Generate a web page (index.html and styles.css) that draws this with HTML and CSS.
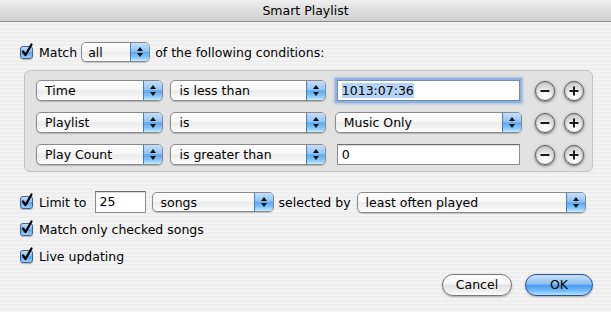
FILE: index.html
```html
<!DOCTYPE html>
<html lang="en">
<head>
  <meta charset="UTF-8">
  <title>Smart Playlist</title>
  <link rel="stylesheet" href="styles.css">
</head>
<body>
  <div class="window">
    <div class="titlebar">Smart Playlist</div>

    <div class="content">
      <div class="match-row">
        <label class="check"><span class="box"><svg width="13" height="13" viewBox="0 0 13 13"><path d="M3 6.5 L5.5 10 L11.5 -0.5" fill="none" stroke="#000" stroke-width="2.2" stroke-linecap="round" stroke-linejoin="round"/></svg></span>Match</label>
        <div class="popup popup-all"><span class="popup-label">all</span><span class="arrows"></span></div>
        <span class="label">of the following conditions:</span>
      </div>

      <div class="conditions">
        <div class="cond-row">
          <div class="popup popup-field"><span class="popup-label">Time</span><span class="arrows"></span></div>
          <div class="popup popup-op"><span class="popup-label">is less than</span><span class="arrows"></span></div>
          <div class="field field-value focused"><span class="selected">1013:07:36</span></div>
          <div class="round-btn"><svg width="20" height="20" viewBox="0 0 20 20"><path d="M5.5 10 H14.5" stroke="#1a1a1a" stroke-width="2"/></svg></div>
          <div class="round-btn"><svg width="20" height="20" viewBox="0 0 20 20"><path d="M5.5 10 H14.5 M10 5.5 V14.5" stroke="#1a1a1a" stroke-width="2"/></svg></div>
        </div>
        <div class="cond-row">
          <div class="popup popup-field"><span class="popup-label">Playlist</span><span class="arrows"></span></div>
          <div class="popup popup-op"><span class="popup-label">is</span><span class="arrows"></span></div>
          <div class="popup popup-value"><span class="popup-label">Music Only</span><span class="arrows"></span></div>
          <div class="round-btn"><svg width="20" height="20" viewBox="0 0 20 20"><path d="M5.5 10 H14.5" stroke="#1a1a1a" stroke-width="2"/></svg></div>
          <div class="round-btn"><svg width="20" height="20" viewBox="0 0 20 20"><path d="M5.5 10 H14.5 M10 5.5 V14.5" stroke="#1a1a1a" stroke-width="2"/></svg></div>
        </div>
        <div class="cond-row">
          <div class="popup popup-field"><span class="popup-label">Play Count</span><span class="arrows"></span></div>
          <div class="popup popup-op"><span class="popup-label">is greater than</span><span class="arrows"></span></div>
          <div class="field field-value">0</div>
          <div class="round-btn"><svg width="20" height="20" viewBox="0 0 20 20"><path d="M5.5 10 H14.5" stroke="#1a1a1a" stroke-width="2"/></svg></div>
          <div class="round-btn"><svg width="20" height="20" viewBox="0 0 20 20"><path d="M5.5 10 H14.5 M10 5.5 V14.5" stroke="#1a1a1a" stroke-width="2"/></svg></div>
        </div>
      </div>

      <div class="options">
        <div class="limit-row">
          <label class="check"><span class="box"><svg width="13" height="13" viewBox="0 0 13 13"><path d="M3 6.5 L5.5 10 L11.5 -0.5" fill="none" stroke="#000" stroke-width="2.2" stroke-linecap="round" stroke-linejoin="round"/></svg></span>Limit to</label>
          <div class="field field-limit">25</div>
          <div class="popup popup-unit"><span class="popup-label">songs</span><span class="arrows"></span></div>
          <span class="label">selected by</span>
          <div class="popup popup-order"><span class="popup-label">least often played</span><span class="arrows"></span></div>
        </div>
        <div class="check-row">
          <label class="check"><span class="box"><svg width="13" height="13" viewBox="0 0 13 13"><path d="M3 6.5 L5.5 10 L11.5 -0.5" fill="none" stroke="#000" stroke-width="2.2" stroke-linecap="round" stroke-linejoin="round"/></svg></span>Match only checked songs</label>
        </div>
        <div class="check-row live">
          <label class="check"><span class="box"><svg width="13" height="13" viewBox="0 0 13 13"><path d="M3 6.5 L5.5 10 L11.5 -0.5" fill="none" stroke="#000" stroke-width="2.2" stroke-linecap="round" stroke-linejoin="round"/></svg></span>Live updating</label>
        </div>
      </div>

      <div class="buttons">
        <div class="btn btn-cancel">Cancel</div>
        <div class="btn btn-ok">OK</div>
      </div>
    </div>
  </div>
</body>
</html>
```

FILE: styles.css
```css
* {
  margin: 0;
  padding: 0;
  box-sizing: border-box;
}

body {
  font-family: "DejaVu Sans", "Liberation Sans", sans-serif;
  font-size: 12.5px;
  color: #000;
  background: #ededed;
}

.window {
  width: 611px;
  height: 312px;
  overflow: hidden;
  background: repeating-linear-gradient(to bottom, #eeeeee 0, #eeeeee 2px, #f3f3f3 2px, #f3f3f3 4px);
}

.titlebar {
  height: 22px;
  line-height: 21px;
  text-align: center;
  background: linear-gradient(to bottom, #f0f0f0 0%, #dedede 45%, #d2d2d2 100%);
  border-bottom: 1px solid #8e8e8e;
}

.content {
  padding: 20px 18px 0 20px;
}

/* Match row */
.match-row {
  display: flex;
  align-items: center;
  height: 20px;
}

.check {
  display: flex;
  align-items: center;
  white-space: nowrap;
}

.box {
  width: 13px;
  height: 13px;
  margin-right: 6px;
  border: 1px solid #3f628f;
  border-radius: 3px;
  background: linear-gradient(to bottom, #c4def8 0%, #86b9ef 48%, #5e9fe8 52%, #9fd3fd 100%);
  box-shadow: 0 1px 1px rgba(0, 0, 0, 0.25);
  position: relative;
}

.box svg {
  position: absolute;
  top: -2px;
  left: -1px;
  overflow: visible;
}

.label {
  white-space: nowrap;
}

/* popup buttons */
.popup {
  display: flex;
  align-items: center;
  height: 21px;
  border: 1px solid #8a8a8a;
  border-radius: 5px;
  background: linear-gradient(to bottom, #ffffff 0%, #f6f6f6 45%, #ebebeb 52%, #f7f7f7 85%, #ffffff 100%);
  box-shadow: 0 1px 1px rgba(0, 0, 0, 0.2);
  overflow: hidden;
}

.popup-label {
  flex: 1;
  padding-left: 8px;
  white-space: nowrap;
}

.arrows {
  width: 19px;
  height: 100%;
  position: relative;
  border-left: 1px solid #4b79b8;
  background: linear-gradient(to bottom, #c6e0fa 0%, #91c4f3 46%, #5ea8ef 52%, #84c7fb 80%, #c6ecff 100%);
}

.arrows::before,
.arrows::after {
  content: "";
  position: absolute;
  left: 6px;
  border-left: 3px solid transparent;
  border-right: 3px solid transparent;
}

.arrows::before {
  top: 4px;
  border-bottom: 4px solid #111;
}

.arrows::after {
  bottom: 4px;
  border-top: 4px solid #111;
}

.popup-all {
  width: 69px;
  height: 20px;
  margin: 0 5px 0 4px;
}

.popup-all .popup-label {
  padding-left: 6px;
}

/* conditions box */
.conditions {
  width: 569px;
  margin: 8px 0 0 4px;
  padding: 9px 8px 6px 11px;
  display: flex;
  flex-direction: column;
  gap: 11px;
  background: #e2e2e2;
  border: 1px solid #c4c4c4;
  border-radius: 6px;
}

.cond-row {
  display: flex;
  align-items: center;
  height: 21px;
}

.popup-field {
  width: 128px;
  margin-right: 7px;
}

.popup-op {
  width: 156px;
  margin-right: 9px;
}

.popup-value {
  width: 188px;
  margin-right: 13px;
}

.field {
  height: 21px;
  line-height: 19px;
  padding-left: 4px;
  background: #fff;
  border: 1px solid #8c8c8c;
  border-top-color: #6b6b6b;
  box-shadow: inset 0 1px 1px rgba(0, 0, 0, 0.15);
  white-space: nowrap;
}

.field-value {
  width: 184px;
  margin: 0 15px 0 2px;
}

.focused {
  border-color: #6e8fb8;
  box-shadow: 0 0 0 2px #8fb3de, 0 0 2px 3px rgba(120, 160, 215, 0.5);
}

.selected {
  background: #b5d3f7;
}

.round-btn {
  width: 20px;
  height: 20px;
  margin-right: 9px;
  border: 1px solid #606060;
  border-radius: 50%;
  background: radial-gradient(circle at 50% 75%, #ffffff 0%, #f0f0f0 35%, #cfcfcf 70%, #9c9c9c 100%);
  box-shadow: 0 1px 3px rgba(0, 0, 0, 0.6);
}

.round-btn svg {
  display: block;
  margin: -1px;
}

.round-btn:last-child {
  margin-right: 0;
}

/* options */
.options {
  margin-top: 19px;
  display: flex;
  flex-direction: column;
}

.limit-row {
  display: flex;
  align-items: center;
  height: 22px;
}

.field-limit {
  width: 51px;
  height: 22px;
  line-height: 20px;
  margin: 0 6px 0 8px;
}

.popup-unit {
  width: 122px;
  height: 20px;
  margin-right: 5px;
}

.popup-order {
  width: 229px;
  height: 21px;
  margin-left: 6px;
}

.check-row {
  display: flex;
  align-items: center;
  height: 22px;
  margin-top: 5px;
}

.check-row.live {
  margin-top: 5px;
}

/* dialog buttons */
.buttons {
  display: flex;
  justify-content: flex-end;
  gap: 13px;
  margin-top: 7px;
}

.btn {
  height: 22px;
  line-height: 20px;
  text-align: center;
  border-radius: 11px;
  box-shadow: 0 1px 2px rgba(0, 0, 0, 0.3);
}

.btn-cancel {
  width: 70px;
  border: 1px solid #777;
  background: linear-gradient(to bottom, #ffffff 0%, #f4f4f4 45%, #e3e3e3 52%, #f2f2f2 85%, #ffffff 100%);
}

.btn-ok {
  width: 68px;
  border: 1px solid #2b4f91;
  background: linear-gradient(to bottom, #c9e3fb 0%, #8dc0f2 45%, #4b9cee 52%, #74bdfa 80%, #b9e6ff 100%);
}
```
